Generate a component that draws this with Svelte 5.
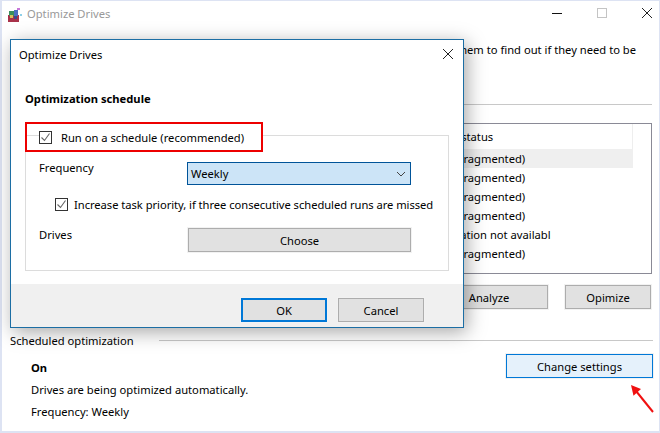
<script>
	// Rows of the drive list behind the dialog
	const rows = ['OK (0% fragmented)', 'OK (0% fragmented)', 'OK (0% fragmented)', 'OK (0% fragmented)', 'Optimization not availabl', 'OK (0% fragmented)'];
</script>

<div class="window">
	<header class="titlebar">
		<svg class="app-icon" width="16" height="16" viewBox="0 0 16 16">
			<rect x="1" y="8" width="11" height="7" fill="#a8324a" />
			<rect x="2" y="4" width="5" height="5" fill="#3a8f5c" />
			<rect x="7" y="3" width="4" height="6" fill="#4a6fc0" />
			<rect x="3" y="8" width="3" height="3" fill="#d8c05a" />
			<rect x="7" y="9" width="3" height="3" fill="#3c4a88" />
			<rect x="10" y="1" width="3" height="2" fill="#c878d8" />
			<rect x="13" y="7" width="2" height="2" fill="#8fd0e8" />
		</svg>
		<span class="title">Optimize Drives</span>
		<div class="controls">
			<svg width="12" height="12" viewBox="0 0 12 12"><path d="M1 6.5h10" stroke="#111" fill="none" /></svg>
			<svg width="12" height="12" viewBox="0 0 12 12"><rect x="1.5" y="1.5" width="9" height="9" stroke="#c4c4c4" fill="none" /></svg>
			<svg width="12" height="12" viewBox="0 0 12 12"><path d="M1 1l10 10M11 1L1 11" stroke="#222" fill="none" /></svg>
		</div>
	</header>

	<p class="intro">You can optimize your drives to help your computer run more efficiently, or analyze them to find out if they need to be optimized.</p>
	<hr class="rule" />

	<div class="list">
		<div class="list-head">Current status</div>
		{#each rows as row, i}
			<div class="list-row" class:selected={i === 0}>{row}</div>
		{/each}
	</div>

	<div class="list-actions">
		<button class="btn analyze">Analyze</button>
		<button class="btn">Opimize</button>
	</div>

	<div class="sched-title"><span>Scheduled optimization</span><i></i></div>
	<div class="sched">
		<div class="sched-info">
			<b>On</b>
			<span>Drives are being optimized automatically.</span>
			<span>Frequency: Weekly</span>
		</div>
		<button class="btn hot">Change settings</button>
	</div>
</div>

<svg class="arrow" width="30" height="34" viewBox="0 0 30 34">
	<path d="M25 31L8 10" stroke="#f01010" stroke-width="2" fill="none" />
	<path d="M3 4l10 4-7.500 6.700z" fill="#f01010" />
</svg>

<div class="dialog">
	<div class="dialog-title">
		<span>Optimize Drives</span>
		<svg width="12" height="12" viewBox="0 0 12 12"><path d="M1 1l10 10M11 1L1 11" stroke="#222" fill="none" /></svg>
	</div>
	<div class="dialog-body">
		<h2>Optimization schedule</h2>
		<div class="group">
			<label class="legend">
				<span class="check"><svg width="11" height="11" viewBox="0 0 11 11"><path d="M1.500 5.500l3 3 5-7" stroke="#666" stroke-width="1.100" fill="none" /></svg></span>
				<span class="legend-text">Run on a schedule (recommended)</span>
			</label>
			<div class="field">
				<span class="field-label">Frequency</span>
				<div class="select">
					<span>Weekly</span>
					<svg width="10" height="6" viewBox="0 0 10 6"><path d="M1 1l4 4 4-4" stroke="#444" fill="none" /></svg>
				</div>
			</div>
			<label class="priority">
				<span class="check"><svg width="11" height="11" viewBox="0 0 11 11"><path d="M1.500 5.500l3 3 5-7" stroke="#666" stroke-width="1.100" fill="none" /></svg></span>
				Increase task priority, if three consecutive scheduled runs are missed
			</label>
			<div class="field drives">
				<span class="field-label">Drives</span>
				<button class="btn choose">Choose</button>
			</div>
		</div>
	</div>
	<div class="dialog-foot">
		<button class="btn ok">OK</button>
		<button class="btn">Cancel</button>
	</div>
</div>

<style>
	:global(body) {
		background: #fff;
		overflow: hidden;
	}

	.window {
		width: 660px;
		height: 433px;
		box-sizing: border-box;
		border: 1px solid #dde3f3;
		border-left-width: 2px;
		border-bottom-width: 2px;
		background: #fff;
		color: #000;
		font-family: 'Noto Sans', sans-serif;
		font-size: 11.2px;
		overflow: hidden;
	}

	.titlebar {
		display: flex;
		align-items: center;
		height: 27px;
		padding-left: 5px;
	}

	.app-icon {
		margin-right: 4px;
	}

	.title {
		color: #999;
		margin-bottom: 3px;
	}

	.controls {
		margin-left: auto;
		display: flex;
		gap: 33px;
		padding: 0 6px 3px 0;
	}

	.intro {
		margin: 13px 14px 0 14px;
		line-height: 18px;
		height: 36px;
	}

	.rule {
		margin: 27px 7px 0 12px;
		border: 0;
		border-top: 1px solid #c8c8c8;
	}

	.list {
		margin: 18px 7px 0 12px;
		height: 151px;
		box-sizing: border-box;
		border: 1px solid #8a8a96;
	}

	.list-head {
		height: 25px;
		line-height: 25px;
		padding-left: 403px;
		margin-right: 18px;
		box-sizing: border-box;
		border-right: 1px solid #eee;
	}

	.list-row {
		height: 19px;
		line-height: 19px;
		padding-left: 404px;
		margin-right: 18px;
	}

	.selected {
		background: #efefef;
	}

	.list-actions {
		display: flex;
		justify-content: flex-end;
		gap: 17px;
		margin: 11px 8px 0 0;
	}

	.btn {
		font: inherit;
		color: #000;
		background: #e1e1e1;
		border: 1px solid #adadad;
		box-shadow: 0 0 0 1px #f2f2f2;
		padding: 0;
		height: 24px;
		width: 86px;
	}

	/* runs on behind the dialog, its label stays centred */
	.analyze {
		width: 118px;
	}

	.sched-title {
		display: flex;
		align-items: center;
		margin: 24px 6px 0 8px;
		gap: 25px;
		line-height: 16px;
	}

	.sched-title i {
		flex: 1;
		border-top: 1px solid #c8c8c8;
		margin-top: -2px;
	}

	.sched {
		display: flex;
		justify-content: space-between;
		align-items: flex-start;
		margin: 5px 6px 0 29px;
	}

	.sched-info {
		display: flex;
		flex-direction: column;
		padding-top: 3px;
		line-height: 22px;
	}

	.hot {
		width: 147px;
		background: #e5f1fb;
		border-color: #0078d7;
	}

	.arrow {
		position: absolute;
		left: 628px;
		top: 381px;
	}

	.dialog {
		position: absolute;
		left: 10px;
		top: 39px;
		width: 454px;
		height: 289px;
		box-sizing: border-box;
		display: flex;
		flex-direction: column;
		background: #fff;
		border: 1px solid #1c6ea4;
		box-shadow: 3px 4px 18px rgba(0, 0, 0, 0.35);
		font-family: 'Noto Sans', sans-serif;
		font-size: 11.2px;
		color: #000;
	}

	.dialog-title {
		display: flex;
		justify-content: space-between;
		align-items: center;
		padding: 0 9px 2px 8px;
		height: 30px;
		box-sizing: border-box;
		flex: none;
	}

	.dialog-body {
		flex: 1;
		padding: 0 14px;
	}

	h2 {
		margin: 20px 0 0;
		font-size: 11.2px;
		font-weight: 700;
		line-height: 18px;
	}

	.group {
		position: relative;
		margin-top: 27px;
		height: 136px;
		box-sizing: border-box;
		border: 1px solid #dcdcdc;
		padding: 26px 37px 0 13px;
	}

	/* red marker box, the group's top line shows through left of the checkbox */
	.legend {
		position: absolute;
		left: -1px;
		top: -14px;
		display: flex;
		align-items: center;
		width: 238px;
		height: 30px;
		box-sizing: border-box;
		padding-left: 12px;
		border: 2px solid #ed0000;
	}

	.legend-text {
		flex: 1;
		align-self: stretch;
		display: flex;
		align-items: center;
		padding-left: 9px;
		background: #fff;
	}

	.check {
		flex: none;
		display: inline-flex;
		width: 11px;
		height: 11px;
		border: 1px solid #333;
		background: #fff;
	}

	.field {
		display: flex;
		align-items: flex-start;
	}

	.field-label {
		width: 148px;
		line-height: 18px;
		margin-top: -3px;
	}

	.select {
		flex: 1;
		height: 23px;
		box-sizing: border-box;
		display: flex;
		align-items: center;
		justify-content: space-between;
		padding: 0 4px 0 3px;
		background: #cce4f7;
		border: 1px solid #005499;
	}

	.priority {
		display: flex;
		align-items: center;
		gap: 6px;
		height: 16px;
		margin: 11px -30px 0 16px;
		white-space: nowrap;
		letter-spacing: -0.04px;
	}

	.drives {
		margin-top: 16px;
	}

	.drives .field-label {
		margin-top: -2px;
	}

	.choose {
		flex: 1;
		margin-left: 1px;
	}

	.dialog-foot {
		flex: none;
		display: flex;
		justify-content: flex-end;
		gap: 11px;
		align-items: flex-start;
		height: 43px;
		box-sizing: border-box;
		padding: 14px 39px 0 0;
		background: #f0f0f0;
	}

	.ok {
		border: 2px solid #0078d7;
	}
</style>
